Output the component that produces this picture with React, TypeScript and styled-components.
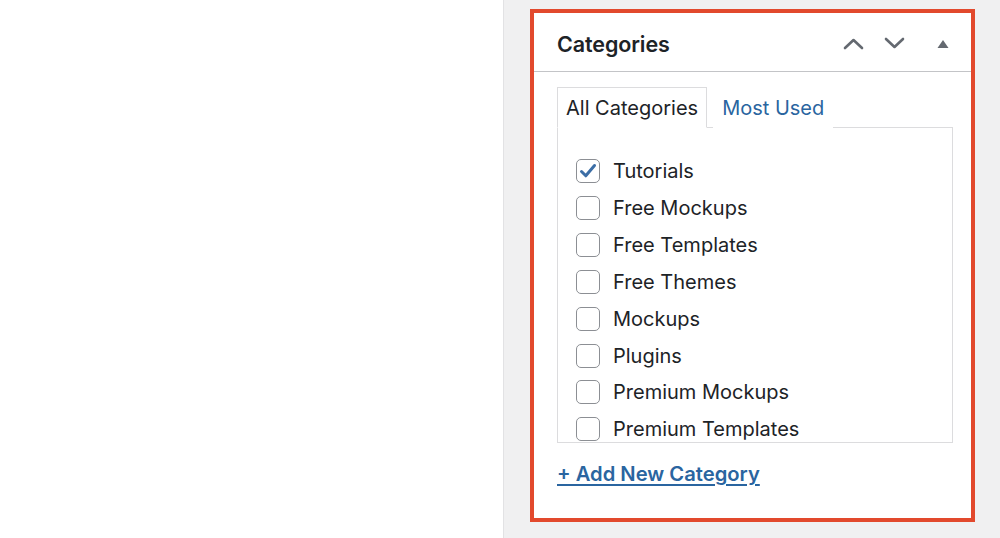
import React from "react";
import styled, { createGlobalStyle } from "styled-components";

const GlobalStyle = createGlobalStyle`
  html, body {
    margin: 0;
    padding: 0;
    height: 100%;
    background: #ffffff;
  }
  body {
    font-family: Inter, "Noto Sans", "Liberation Sans", sans-serif;
    color: #1d2327;
  }
  #root {
    height: 100%;
  }
`;

const categories = [
  { name: "Tutorials", checked: true },
  { name: "Free Mockups", checked: false },
  { name: "Free Templates", checked: false },
  { name: "Free Themes", checked: false },
  { name: "Mockups", checked: false },
  { name: "Plugins", checked: false },
  { name: "Premium Mockups", checked: false },
  { name: "Premium Templates", checked: false },
];

const Page = styled.div`
  display: flex;
  height: 538px;
  width: 1000px;
  overflow: hidden;
`;

const Editor = styled.div`
  width: 503px;
  flex-shrink: 0;
  background: #ffffff;
  border-right: 1px solid #e2e2e4;
`;

const Sidebar = styled.div`
  flex: 1;
  background: #f0f0f1;
  padding: 9px 25px 0 26px;
`;

const Postbox = styled.div`
  height: 513px;
  box-sizing: border-box;
  background: #ffffff;
  border: 4px solid #e2492d;
  display: flex;
  flex-direction: column;
`;

const Header = styled.div`
  height: 59px;
  box-sizing: border-box;
  display: flex;
  align-items: center;
  padding: 3px 0 0 23px;
  border-bottom: 1px solid #c3c4c7;
`;

const Title = styled.h2`
  flex: 1;
  margin: 0;
  font-size: 21.5px;
  font-weight: 600;
  letter-spacing: -0.1px;
`;

const HandleButton = styled.button<{ $w: number }>`
  width: ${({ $w }) => $w}px;
  height: 36px;
  padding: 0;
  border: 0;
  background: none;
  display: flex;
  align-items: center;
  justify-content: center;
  color: #646970;
`;

const Inside = styled.div`
  padding: 15px 18px 0 23px;
  display: flex;
  flex-direction: column;
`;

const Tabs = styled.div`
  display: flex;
  height: 41px;
  position: relative;
  z-index: 1;
  margin-bottom: -1px;
`;

const Tab = styled.div<{ $active?: boolean }>`
  display: flex;
  align-items: center;
  padding: 0 8px;
  box-sizing: border-box;
  height: 41px;
  font-size: 20px;
  color: ${({ $active }) => ($active ? "#1d2327" : "#2a65a0")};
  background: #ffffff;
  border: 1px solid ${({ $active }) => ($active ? "#dcdcde" : "transparent")};
  border-bottom: 1px solid ${({ $active }) => ($active ? "#ffffff" : "transparent")};
  margin-right: 6px;
`;

const Panel = styled.div`
  height: 316px;
  box-sizing: border-box;
  border: 1px solid #dcdcde;
  overflow: hidden;
  padding: 25px 18px 0 18px;
`;

const List = styled.ul`
  list-style: none;
  margin: 0;
  padding: 0;
`;

const Item = styled.li`
  display: flex;
  align-items: center;
  height: 36.85px;
  font-size: 20px;
`;

const Box = styled.span<{ $checked: boolean }>`
  width: 24px;
  height: 24px;
  box-sizing: border-box;
  border: 1.5px solid #8c8f94;
  border-radius: 5px;
  margin-right: 13px;
  display: flex;
  align-items: center;
  justify-content: center;
  flex-shrink: 0;
  background: #ffffff;
`;

const AddLink = styled.a`
  margin-top: 18px;
  align-self: flex-start;
  font-size: 20.2px;
  font-weight: 600;
  color: #2a65a0;
  text-decoration: underline;
  text-underline-offset: 3px;
  text-decoration-thickness: 1.5px;
`;

const Chevron = ({ up }: { up?: boolean }) => (
  <svg width="21" height="13" viewBox="0 0 21 13" fill="none">
    <path
      d={up ? "M2 11 L10.5 3 L19 11" : "M2 2 L10.5 10 L19 2"}
      stroke="currentColor"
      strokeWidth="2.6"
      strokeLinecap="round"
      strokeLinejoin="round"
    />
  </svg>
);

const Caret = () => (
  <svg width="12" height="10" viewBox="0 0 12 10">
    <path d="M6 1 L11.5 9 L0.5 9 Z" fill="currentColor" />
  </svg>
);

const Check = () => (
  <svg width="18" height="16" viewBox="0 0 18 16">
    <path
      d="M2.5 8.5 L6.8 12.8 L15.5 2.5"
      fill="none"
      stroke="#3c6ea6"
      strokeWidth="3"
      strokeLinecap="round"
      strokeLinejoin="round"
    />
  </svg>
);

export default function App() {
  return (
    <>
      <GlobalStyle />
      <Page>
        <Editor />
        <Sidebar>
          <Postbox>
            <Header>
              <Title>Categories</Title>
              <HandleButton $w={41}>
                <Chevron up />
              </HandleButton>
              <HandleButton $w={41}>
                <Chevron />
              </HandleButton>
              <HandleButton $w={56}>
                <Caret />
              </HandleButton>
            </Header>
            <Inside>
              <Tabs>
                <Tab $active>All Categories</Tab>
                <Tab>Most Used</Tab>
              </Tabs>
              <Panel>
                <List>
                  {categories.map((c) => (
                    <Item key={c.name}>
                      <Box $checked={c.checked}>{c.checked && <Check />}</Box>
                      {c.name}
                    </Item>
                  ))}
                </List>
              </Panel>
              <AddLink href="#">+ Add New Category</AddLink>
            </Inside>
          </Postbox>
        </Sidebar>
      </Page>
    </>
  );
}
